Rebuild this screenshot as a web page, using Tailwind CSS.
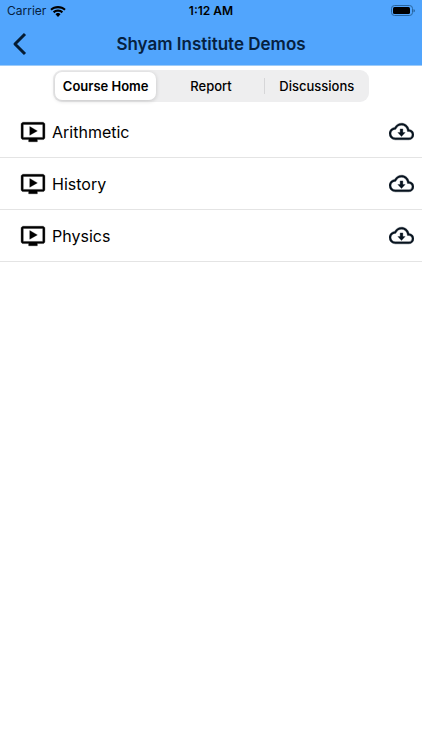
<!DOCTYPE html>
<html lang="en">
<head>
<meta charset="utf-8">
<meta name="viewport" content="width=device-width, initial-scale=1">
<title>Shyam Institute Demos</title>
<script src="https://cdn.jsdelivr.net/npm/@tailwindcss/browser@4"></script>
</head>
<body class="min-h-screen bg-white text-black font-['Inter','Liberation_Sans',sans-serif]">
<svg class="hidden" aria-hidden="true">
  <symbol id="video" viewBox="0 0 24 24"><path stroke="#000" stroke-width=".3" d="M21 3H3c-1.110 0-2 .89-2 2v12c0 1.100.890 2 2 2h5v2h8v-2h5c1.100 0 1.990-.9 1.990-2L23 5c0-1.110-.9-2-2-2zm0 14H3V5h18v12zm-5-6l-7 4V7z"/></symbol>
  <symbol id="cloud" viewBox="0 0 24 24"><path stroke="#08131f" stroke-width=".3" d="M8.500 13H10.700V9.500H13.300V13H15.500L12 16.800L8.500 13M19.350 10.040C21.950 10.220 24 12.360 24 15A5 5 0 0 1 19 20H6A6 6 0 0 1 0 14C0 10.910 2.340 8.360 5.350 8.040C6.600 5.640 9.110 4 12 4C15.640 4 18.670 6.590 19.350 10.040M19 18A3 3 0 0 0 22 15C22 13.450 20.780 12.140 19.220 12.040L17.690 11.930L17.390 10.430C16.880 7.860 14.620 6 12 6C9.940 6 8.080 7.140 7.130 8.970L6.630 9.920L5.560 10.030C3.530 10.240 2 11.950 2 14A4 4 0 0 0 6 18H19Z"/></symbol>
</svg>

<header class="border-b border-[#9dcbf8] bg-[#51a5fd]">
  <div class="grid h-[22px] grid-cols-3 items-center px-[7px] text-xs leading-4">
    <div class="flex items-center gap-1 text-[#06213f]">
      <span>Carrier</span>
      <svg class="h-[11px] w-4 text-black" viewBox="0 0 16 11" fill="currentColor" aria-label="Wi-Fi">
        <path d="M8 0C11 0 13.700 1.200 15.700 3.100L14.300 4.600C12.600 3 10.400 2.300 8 2.300S3.400 3 1.700 4.600L.3 3.100C2.300 1.200 5 0 8 0Z"/>
        <path d="M8 3.500C10 3.500 11.800 4.300 13.100 5.600L11.600 7.200C10.700 6.300 9.400 5.800 8 5.800S5.300 6.300 4.400 7.200L2.900 5.600C4.200 4.300 6 3.500 8 3.500Z"/>
        <path d="M8 7C9 7 9.900 7.500 10.500 8.200L8 10.900L5.500 8.200C6.100 7.500 7 7 8 7Z"/>
      </svg>
    </div>
    <span class="text-center font-semibold">1:12 AM</span>
    <svg class="h-3 w-6 justify-self-end" viewBox="0 0 24 12" aria-label="Battery full">
      <rect x=".5" y=".5" width="21" height="10" rx="3" fill="none" stroke="#28659f"/>
      <rect x="2" y="2" width="17" height="7" rx="1.500" fill="#000"/>
      <path d="M22.500 4V7.500Q24 7 24 5.750T22.500 4Z" fill="#28659f"/>
    </svg>
  </div>
  <div class="grid h-[43px] grid-cols-[44px_1fr_44px] items-center">
    <button type="button" aria-label="Back" class="flex h-full items-center pl-3">
      <svg class="h-6 w-4" viewBox="0 0 16 24" fill="none" stroke="#061c33" stroke-width="3" stroke-linejoin="round"><path d="M13 2L3 12L13 22"/></svg>
    </button>
    <h1 class="text-center text-[17px] leading-6 font-semibold text-[#06213f]">Shyam Institute Demos</h1>
  </div>
</header>

<main>
  <div class="px-[53px] pt-1 pb-1">
    <div role="tablist" class="grid h-8 grid-cols-3 rounded-[9px] bg-[#eeeeef] text-[13px] leading-5 font-medium">
      <button type="button" role="tab" aria-selected="true" class="m-0.5 whitespace-nowrap rounded-[7px] bg-white font-semibold shadow-[0_1px_4px_rgba(0,0,0,0.18)]">Course Home</button>
      <button type="button" role="tab" aria-selected="false">Report</button>
      <div class="flex items-center">
        <span class="h-4 w-px bg-[#d6d6d8]"></span>
        <button type="button" role="tab" aria-selected="false" class="h-full flex-1">Discussions</button>
      </div>
    </div>
  </div>
  <ul class="text-base leading-6">
    <li class="flex h-[52px] items-center border-b border-[#e4e4e4] pr-2 pl-5">
      <svg class="mr-1.5 size-[26px]" aria-hidden="true"><use href="#video"/></svg>
      <a href="#arithmetic" class="flex-1">Arithmetic</a>
      <button type="button" aria-label="Download Arithmetic"><svg class="size-[25px] fill-[#08131f]"><use href="#cloud"/></svg></button>
    </li>
    <li class="flex h-[52px] items-center border-b border-[#e4e4e4] pr-2 pl-5">
      <svg class="mr-1.5 size-[26px]" aria-hidden="true"><use href="#video"/></svg>
      <a href="#history" class="flex-1">History</a>
      <button type="button" aria-label="Download History"><svg class="size-[25px] fill-[#08131f]"><use href="#cloud"/></svg></button>
    </li>
    <li class="flex h-[52px] items-center border-b border-[#e4e4e4] pr-2 pl-5">
      <svg class="mr-1.5 size-[26px]" aria-hidden="true"><use href="#video"/></svg>
      <a href="#physics" class="flex-1">Physics</a>
      <button type="button" aria-label="Download Physics"><svg class="size-[25px] fill-[#08131f]"><use href="#cloud"/></svg></button>
    </li>
  </ul>
</main>
</body>
</html>
